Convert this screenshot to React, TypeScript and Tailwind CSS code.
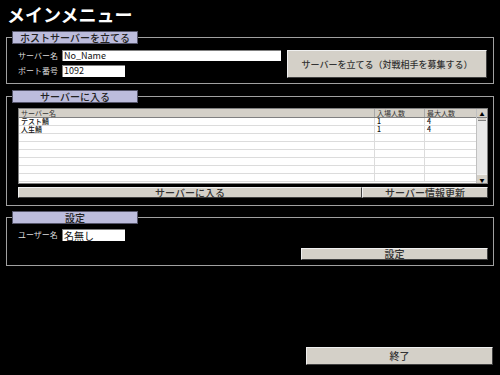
import type { ReactNode } from "react";

type Server = { name: string; joined: string; max: string };

const SERVERS: Server[] = [
  { name: "テスト鯖", joined: "1", max: "4" },
  { name: "人生鯖", joined: "1", max: "4" },
];

const EMPTY_ROWS = 6;

function Group({ title, children }: { title: string; children: ReactNode }) {
  return (
    <fieldset className="mx-[6px] border border-[#a0a0a0]">
      <legend className="ml-[5px] w-[126px] h-[13px] bg-[#bcbcdc] border border-[#55556a] text-[#222]">
        <div className="w-full text-center text-[10px] leading-[11px] font-medium text-[#222]">{title}</div>
      </legend>
      {children}
    </fieldset>
  );
}

function Btn({ children, className = "" }: { children: ReactNode; className?: string }) {
  return (
    <button
      className={`flex items-center justify-center bg-[#d4d0c8] border border-t-[#f0f0f0] border-l-[#f0f0f0] border-r-[#404040] border-b-[#404040] text-[9px] leading-none font-medium text-[#333] ${className}`}
    >
      {children}
    </button>
  );
}

function Field({ value, className = "" }: { value: string; className?: string }) {
  return (
    <div className={`bg-white border-t border-l border-[#808080] pl-px text-[9px] leading-[10px] text-[#111] ${className}`}>
      {value}
    </div>
  );
}

function ServerTable() {
  return (
    <div className="flex h-[76px] border border-[#808080] bg-white">
      <div className="flex-1 flex flex-col">
        {/* header */}
        <div className="flex h-[9px] bg-[#d4d0c8] border-b border-[#808080] text-[7px] leading-[8px] text-[#333]">
          <div className="w-[356px] pl-[2px] border-r border-[#a8a8a8]">サーバー名</div>
          <div className="w-[50px] pl-[2px] border-r border-[#a8a8a8]">入場人数</div>
          <div className="flex-1 pl-[2px]">最大人数</div>
        </div>
        {SERVERS.map((s) => (
          <div key={s.name} className="flex h-[8px] border-b border-[#dcdcdc] text-[7px] leading-[7px] font-medium text-[#111]">
            <div className="w-[356px] pl-[2px] border-r border-[#dcdcdc]">{s.name}</div>
            <div className="w-[50px] pl-[2px] border-r border-[#dcdcdc]">{s.joined}</div>
            <div className="flex-1 pl-[2px]">{s.max}</div>
          </div>
        ))}
        {Array.from({ length: EMPTY_ROWS }).map((_, i) => (
          <div key={i} className="flex h-[8px] border-b border-[#dcdcdc]">
            <div className="w-[356px] border-r border-[#dcdcdc]" />
            <div className="w-[50px] border-r border-[#dcdcdc]" />
            <div className="flex-1" />
          </div>
        ))}
      </div>
      {/* scrollbar */}
      <div className="w-[11px] flex flex-col bg-[#e8e8e8] border-l border-[#c0c0c0]">
        <div className="h-[9px] flex items-center justify-center bg-[#d4d0c8] border-b border-[#808080] text-[5px] leading-none text-black">
          ▲
        </div>
        <div className="h-[3px] mx-px bg-[#d4d0c8] border-b border-[#808080]" />
        <div className="flex-1" />
        <div className="h-[9px] flex items-center justify-center bg-[#d4d0c8] border-t border-[#f0f0f0] text-[5px] leading-none text-black">
          ▼
        </div>
      </div>
    </div>
  );
}

export default function App() {
  return (
    <div className="w-[500px] h-[375px] bg-black font-['Noto_Sans_CJK_JP',sans-serif] flex flex-col">
      {/* title */}
      <div className="h-[31px] pl-[7px] pt-[4px] text-[18px] leading-[20px] font-bold text-white">
        メインメニュー
      </div>

      {/* host */}
      <Group title="ホストサーバーを立てる">
        <div className="flex pl-[11px] pr-[5px] pt-[6px] pb-[5px]">
          <div className="flex flex-col gap-[4px]">
            <div className="flex items-center h-[11px]">
              <span className="w-[44px] text-[8px] leading-[10px] text-[#ddd]">サーバー名</span>
              <Field value="No_Name" className="w-[219px] h-[11px]" />
            </div>
            <div className="flex items-center h-[12px]">
              <span className="w-[44px] text-[8px] leading-[10px] text-[#ddd]">ポート番号</span>
              <Field value="1092" className="w-[63px] h-[12px]" />
            </div>
          </div>
          <Btn className="ml-[6px] w-[200px] h-[28px]">サーバーを立てる（対戦相手を募集する）</Btn>
        </div>
      </Group>

      <div className="h-[6px]" />

      {/* join */}
      <Group title="サーバーに入る">
        <div className="flex flex-col gap-[3px] pl-[11px] pr-[5px] pt-[5px] pb-[7px]">
          <ServerTable />
          <div className="flex h-[11px]">
            <Btn className="w-[344px] h-[11px] text-[10px]">サーバーに入る</Btn>
            <Btn className="flex-1 h-[11px] text-[10px]">サーバー情報更新</Btn>
          </div>
        </div>
      </Group>

      <div className="h-[5px]" />

      {/* settings */}
      <Group title="設定">
        <div className="flex flex-col pl-[11px] pr-[5px] pt-[5px] pb-[5px]">
          <div className="flex items-center h-[12px]">
            <span className="w-[44px] text-[8px] leading-[10px] text-[#ddd]">ユーザー名</span>
            <Field value="名無し" className="w-[63px] h-[12px] text-[10px] leading-[11px]" />
          </div>
          <div className="flex justify-end mt-[7px]">
            <Btn className="w-[187px] h-[12px] text-[10px]">設定</Btn>
          </div>
        </div>
      </Group>

      <div className="flex justify-end mt-[81px] pr-[7px]">
        <Btn className="w-[187px] h-[18px] text-[10px]">終了</Btn>
      </div>
    </div>
  );
}
